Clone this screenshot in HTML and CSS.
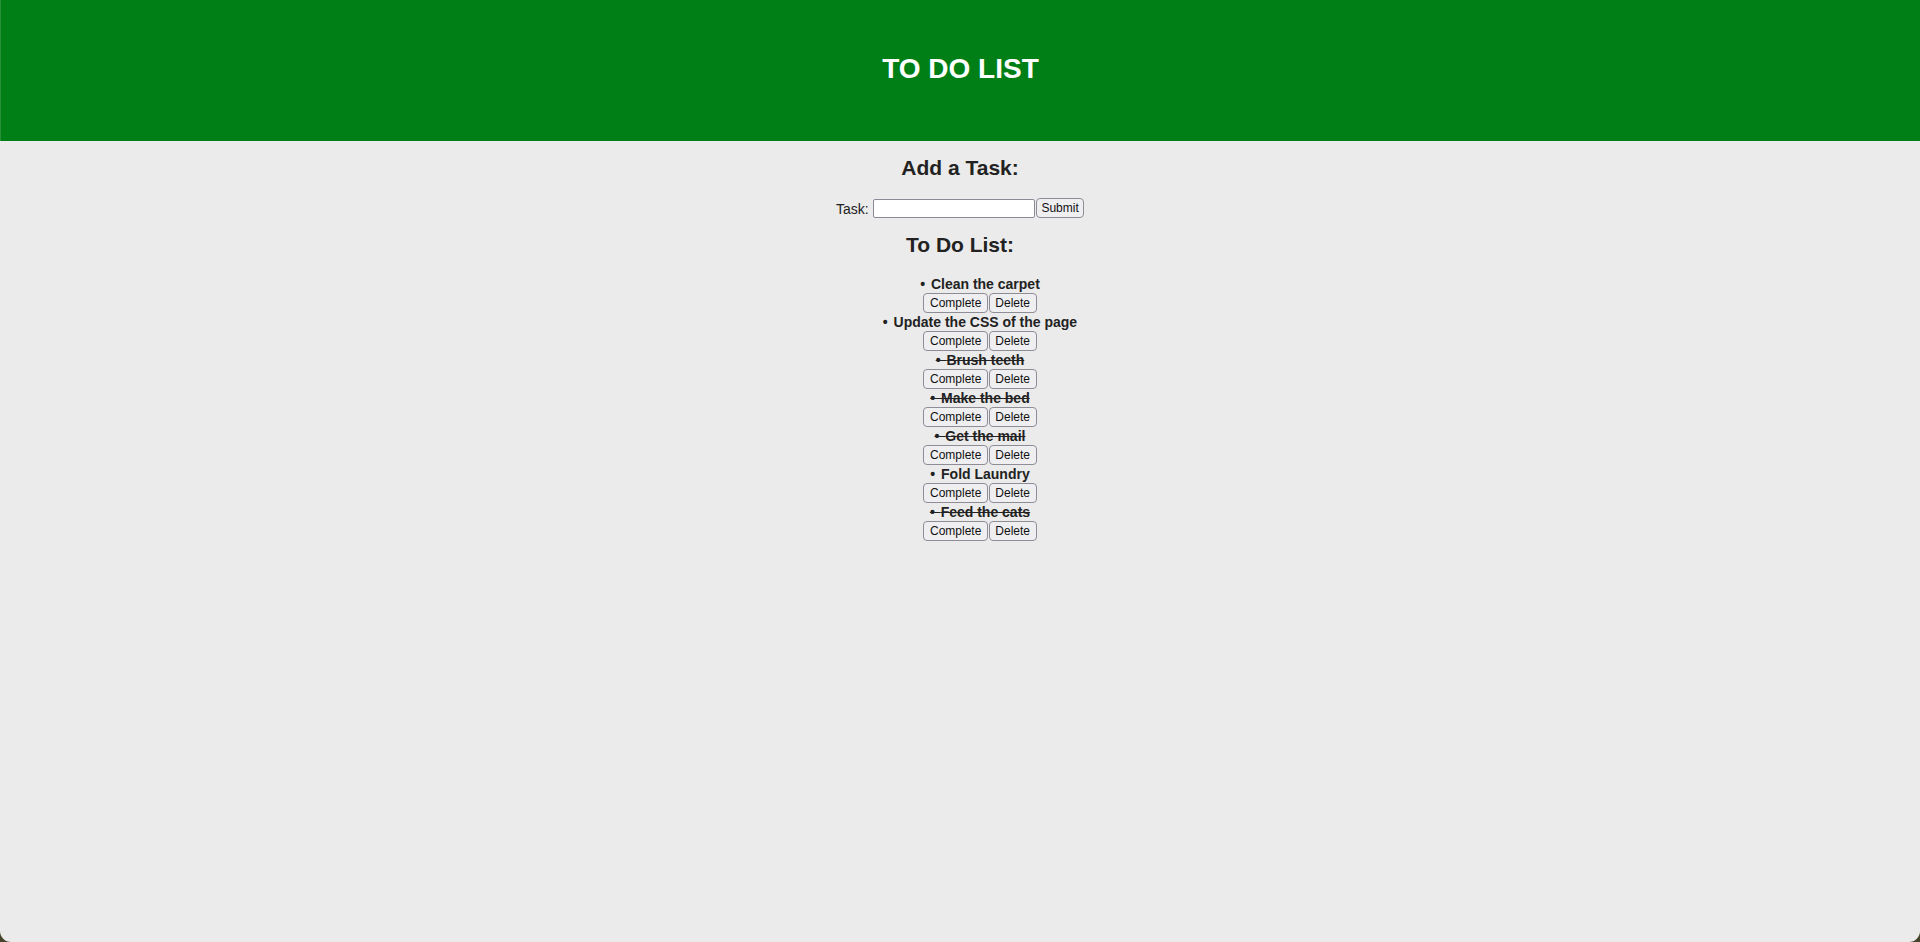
FILE: index.html
```html
<!DOCTYPE html>
<html lang="en">
<head>
<meta charset="utf-8">
<title>To Do List</title>
<link rel="stylesheet" href="styles.css">
</head>
<body>
<div class="page">
  <header class="banner">
    <h1 class="banner-title">TO DO LIST</h1>
  </header>
  <main class="content">
    <h2 class="section-title add-title">Add a Task:</h2>
    <form class="task-form">
      <label class="task-label" for="task">Task:</label>
      <input class="task-input" id="task" type="text">
      <button class="btn submit-btn" type="button">Submit</button>
    </form>
    <h2 class="section-title list-title">To Do List:</h2>
    <ul class="todo-list">
      <li class="todo-item">
        <span class="todo-text">Clean the carpet</span>
        <div class="todo-actions"><button class="btn" type="button">Complete</button><button class="btn" type="button">Delete</button></div>
      </li>
      <li class="todo-item">
        <span class="todo-text">Update the CSS of the page</span>
        <div class="todo-actions"><button class="btn" type="button">Complete</button><button class="btn" type="button">Delete</button></div>
      </li>
      <li class="todo-item done">
        <span class="todo-text">Brush teeth</span>
        <div class="todo-actions"><button class="btn" type="button">Complete</button><button class="btn" type="button">Delete</button></div>
      </li>
      <li class="todo-item done">
        <span class="todo-text">Make the bed</span>
        <div class="todo-actions"><button class="btn" type="button">Complete</button><button class="btn" type="button">Delete</button></div>
      </li>
      <li class="todo-item done">
        <span class="todo-text">Get the mail</span>
        <div class="todo-actions"><button class="btn" type="button">Complete</button><button class="btn" type="button">Delete</button></div>
      </li>
      <li class="todo-item">
        <span class="todo-text">Fold Laundry</span>
        <div class="todo-actions"><button class="btn" type="button">Complete</button><button class="btn" type="button">Delete</button></div>
      </li>
      <li class="todo-item done">
        <span class="todo-text">Feed the cats</span>
        <div class="todo-actions"><button class="btn" type="button">Complete</button><button class="btn" type="button">Delete</button></div>
      </li>
    </ul>
  </main>
</div>
</body>
</html>
```

FILE: styles.css
```css
* {
  box-sizing: border-box;
}

html {
  background: #45432a;
}

body {
  margin: 0;
  font-family: "Liberation Sans", Arial, Helvetica, sans-serif;
  color: #222222;
  font-size: 14px;
}

.page {
  min-height: 942px;
  background: #ebebeb;
  border-radius: 0 0 11px 11px;
  overflow: hidden;
}

.banner {
  height: 141px;
  background: #007f17;
  display: flex;
  align-items: center;
  justify-content: center;
  border-left: 1px solid #2a8f3a;
}

.banner-title {
  margin: 0;
  color: #ffffff;
  font-size: 28px;
  font-weight: bold;
  line-height: 32px;
  padding-bottom: 4px;
}

.content {
  display: flex;
  flex-direction: column;
  align-items: stretch;
}

.section-title {
  margin: 0;
  text-align: center;
  font-size: 21px;
  line-height: 24px;
  font-weight: bold;
}

.add-title {
  margin-top: 15px;
}

.task-form {
  margin-top: 18px;
  height: 20px;
  display: flex;
  justify-content: center;
  align-items: center;
}

.task-label {
  font-size: 14px;
  line-height: 16px;
  margin-right: 4px;
  padding-top: 2px;
}

.task-input {
  width: 162px;
  height: 19px;
  margin: 0 1.5px 0 0;
  padding: 0 3px;
  border: 1px solid #8c8a98;
  border-radius: 2px;
  background: #ffffff;
  font-family: inherit;
  font-size: 12px;
}

.btn {
  height: 20px;
  margin: 0;
  padding: 0 5.5px;
  font-family: "Liberation Sans", Arial, Helvetica, sans-serif;
  font-size: 12px;
  line-height: 18px;
  color: #111111;
  background: #efeff2;
  border: 1px solid #8e8d96;
  border-radius: 4px;
}

.submit-btn {
  width: 48px;
  padding: 0;
}

.list-title {
  margin-top: 14.6px;
}

.todo-list {
  list-style: none;
  margin: 19.4px 0 0;
  padding: 0 0 0 40px;
}

.todo-item {
  text-align: center;
  font-weight: bold;
  font-size: 14px;
}

.todo-text {
  display: block;
  line-height: 17px;
}

.todo-text::before {
  content: "\2022\2006\2005";
}

.todo-item.done .todo-text {
  text-decoration: line-through;
}

.todo-actions {
  display: flex;
  justify-content: center;
  gap: 1px;
  height: 21px;
  font-weight: normal;
}
```
